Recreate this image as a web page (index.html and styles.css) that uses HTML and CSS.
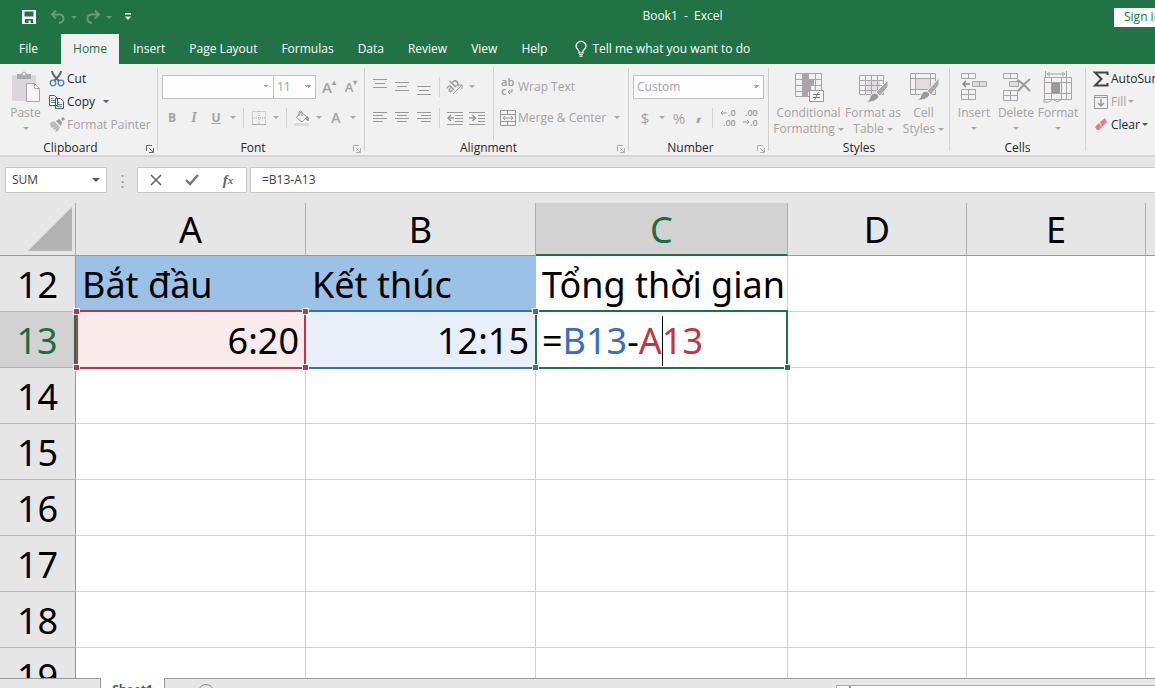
FILE: index.html
```
<!DOCTYPE html>
<html lang="en">
<head>
<meta charset="utf-8">
<title>Book1 - Excel</title>
<link rel="stylesheet" href="styles.css">
</head>
<body>
<div class="app">
<header class="titlebar">
  <div class="quick">
    <button class="q-btn" aria-label="Save"><svg width="16" height="16" viewBox="0 0 16 16"><path d="M1 1h14v14H1z" fill="#fff"/><path d="M3.500 2.500h9v5h-9zM4 10h8v4H9.500v-2.500h-2V14H4z" fill="#217346"/></svg></button>
    <button class="q-btn faded" aria-label="Undo"><svg width="16" height="16" viewBox="0 0 16 16" fill="none" stroke="#fff" stroke-width="2"><path d="M6 1.500 2 5.500l4 4M2.500 5.500H9c6 0 6 8 0 8.500"/></svg></button>
    <i class="arrow light faded"></i>
    <button class="q-btn faded" aria-label="Redo"><svg width="16" height="16" viewBox="0 0 16 16" fill="none" stroke="#fff" stroke-width="2"><path d="m10 1.500 4 4-4 4M13.500 5.500H7c-6 0-6 8 0 8.500"/></svg></button>
    <i class="arrow light faded"></i>
    <button class="q-btn more" aria-label="Customize"><svg width="8" height="8" viewBox="0 0 8 8" fill="#fff"><path d="M1 0h6v1.500H1zM1 3.500h6L4 7z"/></svg></button>
  </div>
  <h1 class="title">Book1&nbsp; -&nbsp; Excel</h1>
  <div class="sign-area"><button class="sign">Sign in</button></div>
</header>
<nav class="tabs">
  <button class="tab file">File</button><button class="tab active">Home</button><button class="tab">Insert</button><button class="tab">Page Layout</button><button class="tab">Formulas</button><button class="tab">Data</button><button class="tab">Review</button><button class="tab">View</button><button class="tab">Help</button>
  <button class="tab tell"><svg width="12" height="16" viewBox="0 0 12 16" fill="none" stroke="#fff" stroke-width="1.200"><path d="M4 12v-2C2 8 1 7 1 5.300a5 5 0 0 1 10 0C11 7 10 8 8 10v2zM4 13.500h4M4.500 15.200h3"/></svg>Tell me what you want to do</button>
</nav>
<section class="ribbon">
  <div class="group clipboard">
    <div class="body">
      <button class="big paste off"><svg width="30" height="32" viewBox="0 0 30 32"><path d="M1 4h24v26H1z" fill="#dcd6dc"/><path d="M6 3h4q3-5 6 0h4v5H6z" fill="#aaa"/><circle cx="13" cy="3" r="1.500" fill="#eee"/><path d="M15.500 12.500h8l5 5v13h-13z" fill="#f8f4f8" stroke="#aaa3aa"/><path d="M23.500 12.500v5h5" fill="none" stroke="#aaa3aa"/></svg><span>Paste</span><i class="arrow"></i></button>
      <div class="stack">
        <button class="row"><svg width="16" height="16" viewBox="0 0 16 16" fill="none"><path d="M3 0c0 3 2 5 7 10M12 0c0 3-2 5-7 10" stroke="#666" stroke-width="2"/><circle cx="4" cy="12" r="2.800" stroke="#4a83bd" stroke-width="1.300"/><circle cx="12" cy="12" r="2.800" stroke="#4a83bd" stroke-width="1.300"/></svg>Cut</button>
        <button class="row"><svg width="16" height="16" viewBox="0 0 16 16" fill="#fff" stroke="#555"><path d="M.5 1.500h5l3 3v7h-8zM6.500 4.500h5l3 3v7h-8z"/><path d="M2 4.500h2.500m-2.500 2h4m-4 2h4M8 8.500h2.500m-2.500 2h5m-5 2h5" stroke="#4a83bd"/></svg>Copy<i class="arrow dark"></i></button>
        <button class="row off"><svg width="16" height="16" viewBox="0 0 16 16"><path d="m1 6 4-2 6 6-2 4-3 1 1-3-3 1 1-3-3 1z" fill="#bbb"/><path d="m7 4 3-2 3 3-1 4zM12 2l2-2 2 2-2 2z" fill="#999"/></svg>Format Painter</button>
      </div>
    </div>
    <div class="label">Clipboard</div><button class="launch strong" aria-label="Clipboard options"><svg width="8" height="8" viewBox="0 0 8 8" fill="none" stroke="currentColor"><path d="M.5 6V.5H6M3 3l4 4M7.500 3v4.500H3"/></svg></button>
  </div>
  <div class="group font">
    <div class="body rows">
      <div class="line"><select class="combo family" aria-label="Font"><option></option></select><select class="combo size" aria-label="Font size"><option>11</option></select><button class="ico grow">A<sup>▴</sup></button><button class="ico shrink">A<sup>▾</sup></button></div>
      <div class="line tools"><button class="ico"><b>B</b></button><button class="ico serif"><i>I</i></button><button class="ico"><b><u>U</u></b></button><i class="arrow"></i><span class="sep"></span>
        <button class="ico" aria-label="Borders"><svg width="14" height="14" viewBox="0 0 14 14" fill="none" stroke="#aaa"><path d="M.5.5h13v13H.5zM7 0v14M0 7h14" stroke-dasharray="1 1"/><path d="M0 13.500h14"/></svg></button><i class="arrow"></i><span class="sep"></span>
        <button class="ico" aria-label="Fill color"><svg width="16" height="16" viewBox="0 0 16 16" fill="none" stroke="#999"><path d="m7 2 6 5-5 5-5.500-4.500zM5 6V2q1.500-2.500 3 0v4"/><path d="M13 6q3 3 1 5l-2-2z" fill="#999"/><path d="M0 14.500h15" stroke="#ddd" stroke-width="3"/></svg></button><i class="arrow"></i><button class="ico color">A</button><i class="arrow"></i></div>
    </div>
    <div class="label">Font</div><button class="launch" aria-label="Font options"><svg width="8" height="8" viewBox="0 0 8 8" fill="none" stroke="currentColor"><path d="M.5 6V.5H6M3 3l4 4M7.500 3v4.500H3"/></svg></button>
  </div>
  <div class="group align">
    <div class="body">
      <div class="rows">
        <div class="line"><button class="ico" aria-label="Top align"><svg width="14" height="16" viewBox="0 0 14 16" stroke="#999"><path d="M0 .5h14M2 4.500h10M0 8.500h14"/></svg></button><button class="ico" aria-label="Middle align"><svg width="14" height="16" viewBox="0 0 14 16" stroke="#999"><path d="M0 3.500h14M2 7.500h10M0 11.500h14"/></svg></button><button class="ico" aria-label="Bottom align"><svg width="14" height="16" viewBox="0 0 14 16" stroke="#999"><path d="M0 7.500h14M2 11.500h10M0 15.500h14"/></svg></button><span class="sep"></span><button class="ico" aria-label="Orientation"><svg width="18" height="16" viewBox="0 0 18 16"><text x="0" y="11" font-size="12" font-family="Open Sans, sans-serif" font-weight="600" fill="#999" transform="rotate(-45 6 8)">ab</text><path d="m7 15 9-9M12 6h4v4" fill="none" stroke="#999"/></svg></button><i class="arrow"></i></div>
        <div class="line tools"><button class="ico" aria-label="Align left"><svg width="14" height="12" viewBox="0 0 14 12" stroke="#999"><path d="M0 .5h14M0 3.500h10M0 6.500h14M0 9.500h10"/></svg></button><button class="ico" aria-label="Center"><svg width="14" height="12" viewBox="0 0 14 12" stroke="#999"><path d="M0 .5h14M2 3.500h10M0 6.500h14M2 9.500h10"/></svg></button><button class="ico" aria-label="Align right"><svg width="14" height="12" viewBox="0 0 14 12" stroke="#999"><path d="M0 .5h14M4 3.500h10M0 6.500h14M4 9.500h10"/></svg></button><span class="sep"></span><button class="ico" aria-label="Decrease indent"><svg width="16" height="14" viewBox="0 0 16 14" fill="none" stroke="#999"><path d="M0 1.500h16M8 4.500h8M8 7.500h8M8 10.500h8M0 13.500h16"/><path d="M7 7H1m3-3L1 7l3 3" stroke-width="1.500"/></svg></button><button class="ico" aria-label="Increase indent"><svg width="16" height="14" viewBox="0 0 16 14" fill="none" stroke="#999"><path d="M0 1.500h16M9 4.500h7M9 7.500h7M9 10.500h7M0 13.500h16"/><path d="M0 7h6M3.500 4l3 3-3 3" stroke-width="1.500"/></svg></button></div>
      </div>
      <div class="rows wraps">
        <div class="line"><button class="row off"><svg width="16" height="18" viewBox="0 0 16 18" font-size="11" font-family="Open Sans, sans-serif" font-weight="600" fill="#999"><text x="1" y="8">ab</text><text x="1" y="17">c</text><path d="M12 11v3H8m2-2-2 2 2 2" fill="none" stroke="#999"/></svg>Wrap Text</button></div>
        <div class="line tools"><button class="row off"><svg width="16" height="16" viewBox="0 0 16 16" fill="none" stroke="#999"><path d="M.5.500h15v15H.5zM0 4.500h16M0 11.500h16M7.500 0v4.500M7.500 11.500V16M3 8h10M5 6 3 8l2 2M11 6l2 2-2 2"/></svg>Merge &amp; Center<i class="arrow"></i></button></div>
      </div>
    </div>
    <div class="label">Alignment</div><button class="launch" aria-label="Alignment options"><svg width="8" height="8" viewBox="0 0 8 8" fill="none" stroke="currentColor"><path d="M.5 6V.5H6M3 3l4 4M7.500 3v4.500H3"/></svg></button>
  </div>
  <div class="group number">
    <div class="body rows">
      <div class="line"><select class="combo format" aria-label="Number format"><option>Custom</option></select></div>
      <div class="line tools"><button class="ico sym">$</button><i class="arrow"></i><button class="ico sym">%</button><button class="ico comma">,</button><span class="sep"></span><button class="ico" aria-label="Increase decimal"><svg width="16" height="16" viewBox="0 0 16 16"><g font-size="9" font-family="Open Sans, sans-serif" font-weight="600" fill="#999"><text x="8" y="6">.0</text><text x="3" y="16">.00</text></g><path d="M7 3H1m2-2L1 3l2 2" fill="none" stroke="#999"/></svg></button><button class="ico" aria-label="Decrease decimal"><svg width="16" height="16" viewBox="0 0 16 16"><g font-size="9" font-family="Open Sans, sans-serif" font-weight="600" fill="#999"><text x="3" y="6">.00</text><text x="8" y="16">.0</text></g><path d="M1 12h6M5 10l2 2-2 2" fill="none" stroke="#999"/></svg></button></div>
    </div>
    <div class="label">Number</div><button class="launch" aria-label="Number options"><svg width="8" height="8" viewBox="0 0 8 8" fill="none" stroke="currentColor"><path d="M.5 6V.5H6M3 3l4 4M7.500 3v4.500H3"/></svg></button>
  </div>
  <div class="group styles">
    <div class="body">
      <button class="big cond off"><svg width="30" height="32" viewBox="0 0 30 32" fill="none" stroke="#aaa3aa"><path d="M1.500 2.500h26v23h-26zM1 8.500h27M1 14.500h27M1 20.500h27M8.500 2v24M21.500 2v24"/><path d="M9 3h6v5H9zM9 9h11v5H9zM9 15h8v5H9zM9 21h5v5H9z" fill="#aaa3aa" stroke="none"/><path d="M15.500 19.500h14v11h-14z" fill="#f8f6f8" stroke="#999"/><path d="M19 23.500h7M19 26.500h7M24.500 21l-4 8" stroke="#777"/></svg><span>Conditional<br>Formatting<i class="arrow"></i></span></button>
      <button class="big fat off"><svg width="30" height="32" viewBox="0 0 30 32" fill="none" stroke="#aaa3aa"><path d="M9 10h13v12H9z" fill="#e2dbe2" stroke="none"/><path d="M1.500 4.500h24v19h-24zM1 9.500h25M1 14.500h25M1 19.500h25M7.500 4v20M13.500 4v20M19.500 4v20"/><path d="M30 9v7l-8 9-4-4z" fill="#aaa" stroke="#f1f1f1"/><path d="M17 22q4 1 4 4-4 6-13 5 4-2 4-5 1-4 5-4z" fill="#999" stroke="#f1f1f1"/></svg><span>Format as<br>Table<i class="arrow"></i></span></button>
      <button class="big cell off"><svg width="30" height="32" viewBox="0 0 30 32" fill="none" stroke="#aaa3aa"><path d="M7 8h14v10H7z" fill="#e2dbe2" stroke="none"/><path d="M1.500 2.500h25v21h-25zM1 7.500h26M1 18.500h26M6.500 2v22M21.500 2v22"/><path d="M30 7v7l-8 10-4-4z" fill="#aaa" stroke="#f1f1f1"/><path d="M17 20q4 1 4 4-4 6-13 5 4-2 4-5 1-4 5-4z" fill="#999" stroke="#f1f1f1"/></svg><span>Cell<br>Styles<i class="arrow"></i></span></button>
    </div>
    <div class="label">Styles</div>
  </div>
  <div class="group cells">
    <div class="body">
      <button class="big off"><svg width="30" height="32" viewBox="0 0 30 32" fill="none" stroke="#aaa3aa"><path d="M2.500 2.500h14v5h-14zM9.500 2.500v5M2.500 18.500h14v10h-14zM9.500 18.500v10M2.500 23.500h14"/><path d="M13.500 10.500h14v5h-14z" fill="#ddd"/><path d="M20.500 10.500v5"/><path d="M11 13H4m3-3-3 3 3 3" stroke="#888" stroke-width="1.500"/></svg><span>Insert</span><i class="arrow"></i></button>
      <button class="big off"><svg width="30" height="32" viewBox="0 0 30 32" fill="none" stroke="#aaa3aa"><path d="M2.500 2.500h14v5h-14zM9.500 2.500v5M2.500 19.500h14v10h-14zM9.500 19.500v10M2.500 24.500h14"/><path d="M8.500 10.500h9v5h-9z" fill="#ddd"/><path d="M16 9c5 2 8 6 13 11M29 8c-5 4-7 7-12 12" stroke="#999" stroke-width="2"/></svg><span>Delete</span><i class="arrow"></i></button>
      <button class="big off"><svg width="30" height="32" viewBox="0 0 30 32" fill="none" stroke="#aaa3aa"><path d="M1.500 6.500h27v22h-27zM1 11.500h28M1 22.500h28M8.500 6v22M18.500 6v22M23.500 6v22"/><path d="M9 12h8v10H9z" fill="#999" stroke="none"/><path d="M2.500 0v6M23.500 0v6M4 3h18M7 1 4 3l3 2M19 1l3 2-3 2M1 28v3q6 1 9-3 4 5 9 0"/></svg><span>Format</span><i class="arrow"></i></button>
    </div>
    <div class="label">Cells</div>
  </div>
  <div class="group editing">
    <div class="body"><div class="stack">
      <button class="row"><svg width="16" height="16" viewBox="0 0 16 16" fill="none" stroke="#444" stroke-width="2"><path d="M14.500 4V1.500H2L8.500 8 2 14.500h12.500V12"/></svg>AutoSum</button>
      <button class="row off"><svg width="16" height="16" viewBox="0 0 16 16" fill="none" stroke="#999"><path d="M1.500 1.500h13v13h-13zM1 3.500h14"/><path d="M8 5v7M5 9l3 3 3-3" stroke-width="1.500"/></svg>Fill<i class="arrow"></i></button>
      <button class="row"><svg width="16" height="16" viewBox="0 0 16 16"><path d="m7 5 5-4 2 4-5 5z" fill="#e87a90"/><path d="m6 6 3 4-3 3H4L2 10z" fill="#e87a90"/></svg>Clear<i class="arrow dark"></i></button>
    </div></div>
  </div>
</section>
<section class="formula">
  <div class="namebox"><input aria-label="Name box" value="SUM"><i class="arrow dark"></i></div>
  <span class="grip">⋮</span>
  <div class="actions">
    <button aria-label="Cancel"><svg width="12" height="12" viewBox="0 0 12 12" fill="none" stroke="#666" stroke-width="1.600"><path d="m1 1 10 10M11 1 1 11"/></svg></button>
    <button aria-label="Enter"><svg width="14" height="12" viewBox="0 0 14 12" fill="none" stroke="#777" stroke-width="2.400"><path d="m1 6 4 4 8-9"/></svg></button>
    <button class="fx">f<sub>x</sub></button>
  </div>
  <input class="expr" aria-label="Formula" value="=B13-A13">
</section>
<main class="sheet">
<table>
  <colgroup><col class="c-head"><col class="c-ab"><col class="c-ab"><col class="c-c"><col class="c-de"><col class="c-de"><col></colgroup>
  <thead><tr><th class="corner"><svg width="46" height="45" viewBox="0 0 46 45"><path d="M45 0v44H1z" fill="#b2b2b2"/></svg></th><th>A</th><th>B</th><th class="sel">C</th><th>D</th><th>E</th><th></th></tr></thead>
  <tbody>
    <tr><th>12</th><td class="blue">Bắt đầu</td><td class="blue">Kết thúc</td><td>Tổng thời gian</td><td></td><td></td><td></td></tr>
    <tr><th class="sel">13</th><td class="num ref red">6:20<i class="knob tl"></i><i class="knob tr"></i><i class="knob bl"></i><i class="knob br"></i></td><td class="num ref azure">12:15<i class="knob tr"></i><i class="knob br"></i></td><td class="ref edit">=<span class="t-blue">B13</span>-<span class="t-red">A<i class="caret"></i>13</span><i class="knob br"></i></td><td></td><td></td><td></td></tr>
    <tr><th>14</th><td></td><td></td><td></td><td></td><td></td><td></td></tr>
    <tr><th>15</th><td></td><td></td><td></td><td></td><td></td><td></td></tr>
    <tr><th>16</th><td></td><td></td><td></td><td></td><td></td><td></td></tr>
    <tr><th>17</th><td></td><td></td><td></td><td></td><td></td><td></td></tr>
    <tr><th>18</th><td></td><td></td><td></td><td></td><td></td><td></td></tr>
    <tr><th>19</th><td></td><td></td><td></td><td></td><td></td><td></td></tr>
  </tbody>
</table>
</main>
<footer class="bottom">
  <button class="sheet-tab">Sheet1</button>
  <button class="add" aria-label="New sheet"></button>
  <div class="scroll"><span class="scroll-start"></span></div>
</footer>
</div>
</body>
</html>
```
FILE: styles.css
```
* { box-sizing: border-box; }
body { margin: 0; font: 12px/16px "Open Sans", "Noto Sans", sans-serif; color: #262626; background: #e6e6e6; }
button, input, select { font: inherit; color: inherit; margin: 0; padding: 0; border: 0; background: none; border-radius: 0; }
button { display: flex; align-items: center; justify-content: center; white-space: nowrap; }
svg { display: block; flex: none; overflow: visible; }
.app { display: flex; flex-direction: column; height: 100vh; overflow: hidden; }

.arrow { flex: none; display: inline-block; border: 3px solid transparent; border-top-color: #a8a8a8; border-bottom: 0; }
.arrow.dark { border-top-color: #555; }
.arrow.light { border-top-color: #fff; }
.faded { opacity: .3; }

.titlebar { display: grid; grid-template-columns: 1fr auto 1fr; align-items: center; height: 34px; flex: none; background: #217346; color: #fff; }
.quick { display: flex; align-items: center; padding-left: 21px; gap: 6px; }
.q-btn { width: 16px; height: 16px; }
.quick .q-btn:nth-child(2) { margin-left: 7px; }
.quick .arrow + .q-btn { margin-left: 2px; }
.quick .arrow { margin-left: -1px; }
.title { margin: 0; padding: 0 0 2px 210px; font-size: 12px; font-weight: 400; }
.sign-area { display: flex; overflow: hidden; justify-content: flex-end; }
.sign { background: #fff; color: #217346; height: 19px; width: 41px; padding-left: 10px; justify-content: flex-start; overflow: hidden; }

.tabs { display: flex; flex: none; height: 30px; background: #217346; color: #fff; }
.tab { padding: 0 12px; }
.tab.file { width: 61px; padding: 0 16px 0 12px; }
.tab.active { width: 58px; margin-right: 2px; background: #f1f1f1; color: #217346; }
.tab.tell { gap: 5px; padding-left: 16px; }

.ribbon { display: flex; flex: none; height: 93px; background: #f1f1f1; border-bottom: 2px solid #d5d5d5; overflow: hidden; }
.group { position: relative; display: flex; flex-direction: column; flex: none; padding: 3px 0 0 3px; }
.group::after { content: ""; position: absolute; right: 0; top: 4px; bottom: 4px; border-right: 1px solid #d0d0d0; }
.body { display: flex; flex: none; height: 73px; }
.label { text-align: center; color: #262626; padding-right: 20px; }
.launch { position: absolute; right: 4px; bottom: 2px; color: #b0b0b0; }
.launch.strong { color: #666; }
.clipboard { width: 158px; }
.font { width: 207px; }
.align { width: 264px; }
.number { width: 140px; }
.styles { width: 181px; }
.cells { width: 136px; }
.styles .label, .cells .label { padding-right: 4px; }
.editing { flex: 1 0 70px; }
.off, .ico, .combo { color: #a3a3a3; }
.stack { display: flex; flex-direction: column; }
.row { height: 23px; gap: 2px; justify-content: flex-start; }
.row .arrow { margin-left: 6px; }
.clipboard .stack { padding-left: 1px; }
.editing .row .arrow { margin-left: 0; }
.editing .stack { padding-left: 4px; }
.big { flex-direction: column; justify-content: flex-start; padding-top: 4px; width: 42px; }
.big svg { margin-bottom: 2px; }
.big > .arrow { margin-top: 6px; }
.big span .arrow { margin: 0 0 2px 3px; }
.paste { width: 45px; }
.cond { width: 73px; }
.fat { width: 56px; }
.cell { width: 45px; }
.rows { display: flex; flex-direction: column; gap: 8px; padding-top: 8px; }
.line { display: flex; align-items: center; height: 23px; }
.ico { width: 22px; height: 22px; flex: none; }
.tools .arrow, .ico + .arrow { margin: 0 3px; }
.sep { width: 1px; height: 20px; margin: 0 4px; background: #d4d4d4; }
.combo { height: 24px; border: 1px solid #c3c3c3; appearance: none; padding: 0 3px; background: linear-gradient(45deg, transparent 50%, #a8a8a8 50%) no-repeat right 7px center / 3px 3px, linear-gradient(-45deg, transparent 50%, #a8a8a8 50%) no-repeat right 4px center / 3px 3px, #fdfdfd; }
.family { width: 112px; margin-left: 1px; }
.size { width: 43px; margin-left: -1px; }
.format { width: 131px; margin-left: 1px; }
.grow { font-size: 15px; font-weight: 600; margin-left: 2px; }
.shrink { font-size: 13px; font-weight: 600; }
.ico sup { font-size: 8px; line-height: 8px; margin-bottom: 10px; }
.serif { font-family: "Liberation Serif", serif; font-size: 14px; font-weight: 700; }
.color { font-size: 14px; font-weight: 600; }
.sym { font-size: 15px; }
.number .sym:first-child { margin-left: 2px; }
.comma { font-size: 22px; font-weight: 700; padding-bottom: 14px; width: 18px; }
.wraps { padding-left: 6px; border-left: 1px solid #d4d4d4; }
.wraps .tools .arrow { margin: 0 0 0 6px; }
.align .rows:first-child { width: 125px; padding-left: 1px; }

.formula { display: flex; flex: none; height: 46px; padding: 10px 0 10px 5px; color: #404040; }
.namebox { display: flex; align-items: center; width: 102px; padding: 0 6px; background: #fff; border: 1px solid #c8c8c8; }
.namebox input { flex: 1; min-width: 0; }
.namebox .arrow { border-width: 4px 4px 0; }
.grip { width: 30px; text-align: center; line-height: 26px; font-size: 15px; color: #999; }
.actions { display: flex; width: 110px; background: #fff; border: 1px solid #c8c8c8; }
.actions button { flex: 1; }
.fx { font: italic 700 15px "Liberation Serif", serif; color: #666; }
.fx sub { font-size: 11px; }
.expr { flex: 1; min-width: 0; margin-left: 3px; padding-left: 11px; background: #fff; border: 1px solid #c8c8c8; border-right: 0; }

.sheet { flex: 1; min-height: 0; overflow: hidden; background: #fff; }
table { table-layout: fixed; width: 100%; border-collapse: separate; border-spacing: 0; font: 36px/48px "Noto Sans", "Open Sans", sans-serif; color: #000; }
.c-head { width: 76px; }
.c-ab { width: 230px; }
.c-c { width: 252px; }
.c-de { width: 179px; }
th { padding: 2px 0 0; background: #e6e6e6; font-weight: 400; border-right: 1px solid #999; border-bottom: 1px solid #b5b5b5; }
thead th { height: 53px; border-color: #b0b0b0; border-bottom-color: #999; }
.corner { padding: 4px 3px 3px 27px; border-right-color: #aaa; }
tbody tr { height: 56px; }
td { position: relative; padding: 2px 6px 0; white-space: nowrap; border-right: 1px solid #d0d0d0; border-bottom: 1px solid #d0d0d0; }
tr > :last-child { border-right: 0; }
th.sel { background: #d2d2d2; color: #1e6b41; }
thead th.sel { border-bottom: 2px solid #217346; }
tbody th.sel { border-right: 2px solid #217346; }
.blue { background: #9bc2e6; border-color: #9bc2e6; }
.num { text-align: right; }
.ref::after { content: ""; position: absolute; inset: -2px -1px -2px 0; border: 2px solid; }
.red { background: #f9ebeb; }
.red::after { border-color: #b93a46; }
.azure { background: #e9eff9; }
.azure::after { border-color: #3b6cb7; border-width: 2px 0; }
.edit::after { border-color: #217346; left: -1px; }
.knob { position: absolute; z-index: 1; width: 7px; height: 7px; border: 1px solid #fff; background: #b93a46; }
.azure .knob { background: #3b6cb7; }
.edit .knob { background: #217346; }
.tl { left: -3px; top: -4px; }
.tr { right: -4px; top: -4px; }
.bl { left: -3px; bottom: -4px; }
.br { right: -4px; bottom: -4px; }
.t-blue { color: #3a6cc4; }
.t-red { color: #bd3641; }
.caret { position: absolute; top: 4px; width: 1px; height: 50px; background: #000; }

.bottom { display: flex; flex: none; height: 10px; border-top: 1px solid #999; background: #e6e6e6; }
.sheet-tab { width: 65px; height: 24px; margin: -1px 0 0 100px; background: #fff; border: solid #999; border-width: 0 1px; color: #217346; font-weight: 700; flex: none; }
.add { width: 16px; height: 16px; margin: 5px 0 0 33px; border: 1px solid #888; border-radius: 50%; flex: none; }
.scroll { flex: 0 0 319px; margin: 6px 0 0 auto; height: 16px; background: #fff; border: 1px solid #aaa; border-right: 0; }
.scroll-start { display: block; width: 14px; height: 16px; border-right: 2px solid #999; }
```
